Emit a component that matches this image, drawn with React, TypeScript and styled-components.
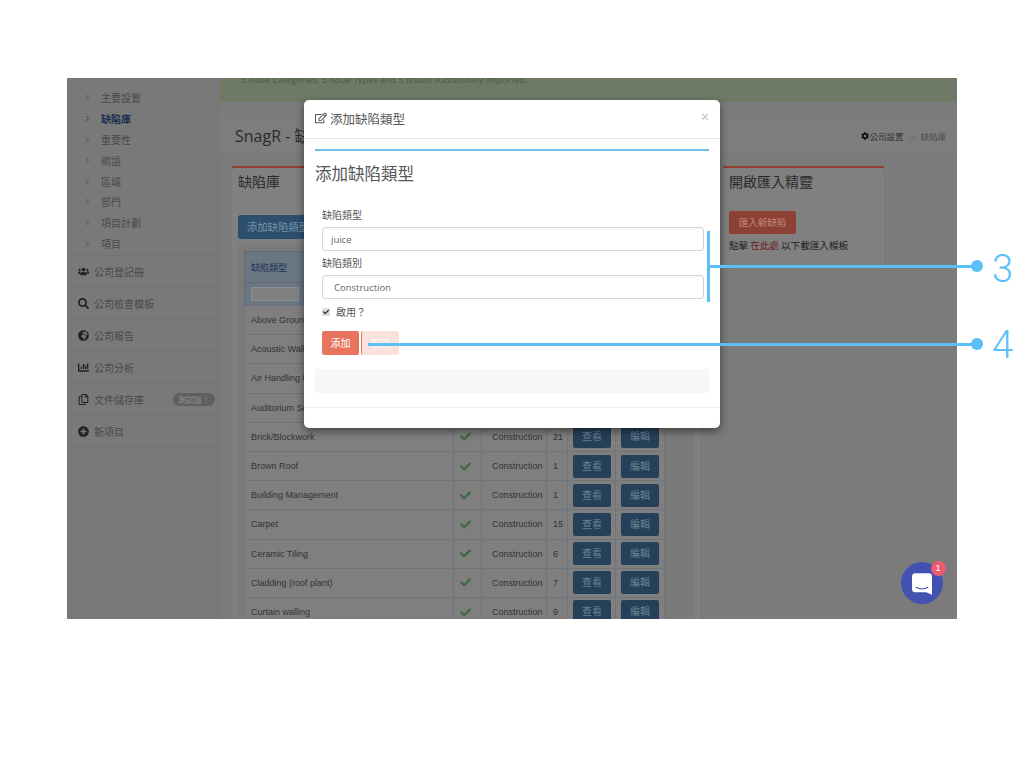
import { FC, ReactNode } from "react";
import styled, { createGlobalStyle } from "styled-components";
import { ChevronRight } from "lucide-react";
import {
  FaCheck,
  FaChartBar,
  FaCog,
  FaGlobeAfrica,
  FaPlusCircle,
  FaRegCopy,
  FaRegEdit,
  FaSearch,
  FaUsers,
} from "react-icons/fa";

const subMenu = ["主要設置", "缺陷庫", "重要性", "術語", "區域", "部門", "項目計劃", "項目"];

const mainMenu: { label: string; icon: ReactNode; badge?: string }[] = [
  { label: "公司登記冊", icon: <FaUsers /> },
  { label: "公司檢查模板", icon: <FaSearch /> },
  { label: "公司報告", icon: <FaGlobeAfrica /> },
  { label: "公司分析", icon: <FaChartBar /> },
  { label: "文件儲存庫", icon: <FaRegCopy />, badge: "測試版！" },
  { label: "新項目", icon: <FaPlusCircle /> },
];

const rows = [
  { name: "Above Ground Drainage", count: 12 },
  { name: "Acoustic Walling", count: 4 },
  { name: "Air Handling Unit", count: 3 },
  { name: "Auditorium Seating", count: 2 },
  { name: "Brick/Blockwork", count: 21 },
  { name: "Brown Roof", count: 1 },
  { name: "Building Management", count: 1 },
  { name: "Carpet", count: 15 },
  { name: "Ceramic Tiling", count: 6 },
  { name: "Cladding (roof plant)", count: 7 },
  { name: "Curtain walling", count: 9 },
];

const columns = [209, 28, 65, 21, 48, 49];

const MessengerIcon: FC = () => (
  <svg width="24" height="26" viewBox="0 0 24 26">
    <path
      d="M4 0h16a4 4 0 0 1 4 4v22l-7-3H4a4 4 0 0 1-4-4V4a4 4 0 0 1 4-4z"
      fill="#fff"
    />
    <path
      d="M5 17c4 2.6 10 2.6 14 0"
      fill="none"
      stroke="#4351b0"
      strokeWidth="1.4"
      strokeLinecap="round"
    />
  </svg>
);

const App: FC = () => {
  return (
    <>
      <GlobalStyle />
      <Page>
        <Frame>
          <Sidebar>
            <SubMenu>
              {subMenu.map((item, k) => (
                <SubItem key={k} $active={item === "缺陷庫"}>
                  <ChevronRight strokeWidth={2} />
                  {item}
                </SubItem>
              ))}
            </SubMenu>
            {mainMenu.map((item, k) => (
              <MainItem key={k}>
                <MainIcon>{item.icon}</MainIcon>
                {item.label}
                {item.badge && <Badge>{item.badge}</Badge>}
              </MainItem>
            ))}
          </Sidebar>

          <Content>
            <Alert>5 Issue Categories, 5 Issue Types and 5 Issues successfully imported.</Alert>
            <PageHeader>
              <PageTitle>SnagR - 缺陷庫</PageTitle>
              <Breadcrumb>
                <FaCog />
                公司設置
                <Sep>&gt;</Sep>
                <Crumb>缺陷庫</Crumb>
              </Breadcrumb>
            </PageHeader>
            <Panels>
              <MainPanel>
                <PanelTitle>缺陷庫</PanelTitle>
                <BlueButton>添加缺陷類型</BlueButton>
                <TableWrap>
                  <Table>
                    <colgroup>
                      {columns.map((w, k) => (
                        <col key={k} style={{ width: w }} />
                      ))}
                    </colgroup>
                    <thead>
                      <tr>
                        <HeadCell>缺陷類型</HeadCell>
                        <HeadCell>啟用</HeadCell>
                        <HeadCell>類別</HeadCell>
                        <HeadCell>#</HeadCell>
                        <HeadCell />
                        <HeadCell />
                      </tr>
                      <tr>
                        <FilterCell>
                          <FilterInput />
                        </FilterCell>
                        <FilterCell />
                        <FilterCell />
                        <FilterCell />
                        <FilterCell />
                        <FilterCell />
                      </tr>
                    </thead>
                    <tbody>
                      {rows.map((row, k) => (
                        <tr key={k}>
                          <Cell>{row.name}</Cell>
                          <CheckCell>
                            <FaCheck />
                          </CheckCell>
                          <CategoryCell>Construction</CategoryCell>
                          <Cell>{row.count}</Cell>
                          <ActionCell>
                            <RowButton>查看</RowButton>
                          </ActionCell>
                          <ActionCell>
                            <RowButton>編輯</RowButton>
                          </ActionCell>
                        </tr>
                      ))}
                    </tbody>
                  </Table>
                </TableWrap>
              </MainPanel>
              <SidePanel>
                <PanelTitle>開啟匯入精靈</PanelTitle>
                <RedButton>匯入新缺陷</RedButton>
                <Hint>
                  點擊 <HintLink>在此處</HintLink> 以下載匯入模板
                </Hint>
              </SidePanel>
            </Panels>
          </Content>

          <Modal>
            <ModalHeader>
              <ModalTitle>
                <FaRegEdit />
                添加缺陷類型
              </ModalTitle>
              <Close>×</Close>
            </ModalHeader>
            <ModalBody>
              <BlueRule />
              <FormTitle>添加缺陷類型</FormTitle>
              <Form>
                <Label>缺陷類型</Label>
                <TextInput defaultValue="juice" />
                <Label>缺陷類別</Label>
                <SelectBox>Construction</SelectBox>
                <CheckRow>
                  <CheckBox>
                    <FaCheck />
                  </CheckBox>
                  啟用？
                </CheckRow>
                <Buttons>
                  <AddButton>添加</AddButton>
                  <CancelButton>取消</CancelButton>
                </Buttons>
              </Form>
              <Well />
            </ModalBody>
            <ModalFooter />
          </Modal>

          <Messenger>
            <MessengerIcon />
            <Unread>1</Unread>
          </Messenger>
        </Frame>

        <Bracket />
        <CalloutLine $left={710} $top={265} $width={267} />
        <Dot $top={266} />
        <Number $top={243}>3</Number>
        <CalloutLine $left={368} $top={343} $width={609} />
        <Dot $top={344} />
        <Number $top={319}>4</Number>
      </Page>
    </>
  );
};

const GlobalStyle = createGlobalStyle`
  html, body {
    margin: 0;
    background: #fff;
  }
  * {
    box-sizing: border-box;
  }
  body {
    font-family: "Open Sans", "Noto Sans CJK TC", sans-serif;
    color: #2b2b2b;
  }
`;

const Page = styled.div`
  position: relative;
  width: 1024px;
  height: 768px;
  padding: 78px 67px 149px;
  overflow: hidden;
`;

/* the page behind the dialog is painted in its dimmed colours */
const Frame = styled.div`
  position: relative;
  display: flex;
  width: 890px;
  height: 541px;
  overflow: hidden;
  background: #7b7b7b;
`;

const Sidebar = styled.aside`
  flex: 0 0 153px;
  background: #797979;
  border-right: 1px solid #757575;
`;

const SubMenu = styled.ul`
  margin: 0;
  padding: 9px 0 1px;
  list-style: none;
  border-bottom: 1px solid #737373;
`;

const SubItem = styled.li<{ $active?: boolean }>`
  display: flex;
  align-items: center;
  height: 20.9px;
  padding-left: 16px;
  font-size: 10px;
  color: ${({ $active }) => ($active ? "#1a2f50" : "#4a4a4a")};
  font-weight: ${({ $active }) => ($active ? 700 : 400)};

  svg {
    width: 9px;
    height: 9px;
    margin-right: 9px;
    color: ${({ $active }) => ($active ? "#1a2f50" : "#484848")};
  }
`;

const MainItem = styled.div`
  display: flex;
  align-items: center;
  height: 32px;
  padding: 0 4px 0 10px;
  font-size: 10px;
  color: #4a4a4a;
  border-bottom: 1px solid #737373;
`;

const MainIcon = styled.span`
  display: flex;
  justify-content: center;
  width: 12px;
  margin-right: 5px;
  color: #222;

  svg {
    width: 11px;
    height: 11px;
  }
`;

const Badge = styled.span`
  margin-left: auto;
  padding: 0 5px;
  height: 13px;
  line-height: 13px;
  font-size: 8px;
  color: #8f8f8f;
  background: #5f5f5f;
  border-radius: 7px;
`;

const Content = styled.main`
  flex: 1;
  min-width: 0;
  display: flex;
  flex-direction: column;
`;

const Alert = styled.div`
  flex: 0 0 24px;
  padding-left: 21px;
  line-height: 4px;
  font-size: 9px;
  color: #4a5a40;
  background: #6f7a66;
  border-radius: 0 0 3px 3px;
`;

const PageHeader = styled.header`
  flex: 0 0 38px;
  display: flex;
  align-items: center;
  justify-content: space-between;
  margin-top: 13px;
  padding: 2px 11px 0 15px;
  background: #7d7d7d;
  border-bottom: 1px solid #777;
`;

const PageTitle = styled.h1`
  margin: 0;
  font-size: 16px;
  font-weight: 400;
  color: #2b2b2b;
`;

const Breadcrumb = styled.div`
  display: flex;
  align-items: center;
  margin-top: 3px;
  font-size: 8.5px;
  color: #333;

  svg {
    width: 8px;
    height: 8px;
    margin-right: 1px;
    color: #111;
  }
`;

const Sep = styled.span`
  margin: 0 6px;
  color: #666;
`;

const Crumb = styled.span`
  color: #484848;
`;

const Panels = styled.div`
  flex: 1;
  min-height: 0;
  display: flex;
  align-items: flex-start;
  gap: 21px;
  margin-top: 13px;
  padding-left: 11px;
`;

const MainPanel = styled.section`
  flex: 0 0 470px;
  height: 460px;
  padding: 4px 6px 0;
  background: #808080;
  border: 1px solid #777;
  border-top: 2px solid #8f4030;
  border-radius: 3px 3px 0 0;
`;

const SidePanel = styled(MainPanel)`
  flex: 0 0 163px;
  height: 100px;
`;

const PanelTitle = styled.h2`
  margin: 0;
  height: 20px;
  line-height: 20px;
  font-size: 14px;
  font-weight: 400;
  color: #2b2b2b;
`;

const BlueButton = styled.div`
  width: 81px;
  height: 24px;
  margin-top: 23px;
  padding-left: 9px;
  line-height: 24px;
  white-space: nowrap;
  font-size: 10.3px;
  color: #7a92a8;
  background: #2c4f6e;
  border-radius: 3px;
`;

const RedButton = styled.div`
  width: 67px;
  height: 23px;
  margin-top: 19px;
  line-height: 23px;
  text-align: center;
  font-size: 9.5px;
  color: #c08a7e;
  background: #8c4134;
  border-radius: 2px;
`;

const Hint = styled.p`
  margin: 5px 0 0;
  font-size: 9.6px;
  line-height: 14px;
  word-spacing: -0.5px;
  white-space: nowrap;
  color: #222;
`;

const HintLink = styled.span`
  color: #6f1c1c;
`;

const TableWrap = styled.div`
  margin: 5px 0 0;
  padding: 7px 6px;
  background: #7a7a7a;
`;

const Table = styled.table`
  width: 420px;
  table-layout: fixed;
  border-collapse: collapse;
  border: 1px solid #5f6a78;
  font-family: "Liberation Sans", "Noto Sans CJK TC", sans-serif;
  font-size: 9px;
  background: #7f7f7f;
`;

const HeadCell = styled.th`
  height: 31px;
  padding: 0 6px;
  text-align: left;
  font-size: 9px;
  font-weight: 400;
  color: #1e3458;
  background: #6a7682;
  border-bottom: 1px solid #5f6a78;
`;

const FilterCell = styled.th`
  height: 23px;
  padding: 0 6px;
  background: #6a7682;
`;

const FilterInput = styled.div`
  width: 48px;
  height: 14px;
  background: #808080;
  border: 1px solid #8a8f96;
  border-radius: 1px;
`;

const Cell = styled.td`
  height: 29.2px;
  padding: 0 6px;
  color: #333;
  white-space: nowrap;
  overflow: hidden;
  border: 1px solid #71737a;
`;

const CheckCell = styled(Cell)`
  color: #3a6a3a;

  svg {
    width: 11px;
    height: 11px;
    vertical-align: middle;
  }
`;

const CategoryCell = styled(Cell)`
  padding-left: 10px;
`;

const ActionCell = styled(Cell)`
  padding: 0 5px;
  text-align: center;
`;

const RowButton = styled.div`
  width: 38px;
  height: 23px;
  line-height: 23px;
  margin: 0 auto;
  font-size: 10px;
  text-align: center;
  color: #6a8094;
  background: #264059;
  border-radius: 2px;
`;

const Modal = styled.div`
  position: absolute;
  top: 22px;
  left: 237px;
  width: 416px;
  height: 328px;
  background: #fff;
  border-radius: 5px;
  box-shadow: 0 3px 9px rgba(0, 0, 0, 0.5);
`;

const ModalHeader = styled.div`
  display: flex;
  align-items: center;
  justify-content: space-between;
  height: 39px;
  padding: 0 11px 2px;
  border-bottom: 1px solid #e8e8e8;
`;

const ModalTitle = styled.h4`
  display: flex;
  align-items: center;
  margin: 0;
  font-size: 12.5px;
  font-weight: 400;
  color: #555;

  svg {
    width: 12px;
    height: 12px;
    margin-right: 3px;
  }
`;

const Close = styled.span`
  margin-top: -3px;
  font-size: 14px;
  color: #bbb;
`;

const ModalBody = styled.div`
  padding: 10px 11px 0;
`;

const BlueRule = styled.div`
  height: 2px;
  background: #6cc3ea;
`;

const FormTitle = styled.h3`
  margin: 11px 0 0;
  line-height: 24px;
  font-size: 16.5px;
  font-weight: 400;
  color: #555;
`;

const Form = styled.div`
  display: flex;
  flex-direction: column;
  padding: 17px 5px 0 7px;
`;

const Label = styled.label`
  height: 24px;
  line-height: 24px;
  font-size: 10px;
  color: #555;
`;

const fieldStyles = `
  width: 382px;
  height: 24px;
  background: #fff;
  border: 1px solid #d5d5d5;
  border-radius: 3px;
  box-shadow: inset 0 1px 1px rgba(0, 0, 0, 0.05);
  font-family: "Open Sans", sans-serif;
  font-size: 9.5px;
  color: #666;
`;

const TextInput = styled.input`
  ${fieldStyles}
  padding: 0 8px;
  outline: none;
`;

const SelectBox = styled.div`
  ${fieldStyles}
  padding: 0 11px;
  line-height: 24px;
`;

const CheckRow = styled.div`
  display: flex;
  align-items: center;
  height: 14px;
  margin-top: 6px;
  line-height: 14px;
  font-size: 10px;
  color: #555;
`;

const CheckBox = styled.span`
  display: flex;
  align-items: center;
  justify-content: center;
  width: 8px;
  height: 8px;
  margin-right: 6px;
  background: #ddd;
  border-radius: 1px;
  color: #222;

  svg {
    width: 6px;
    height: 6px;
  }
`;

const Buttons = styled.div`
  display: flex;
  gap: 2px;
  margin-top: 12px;
`;

const AddButton = styled.div`
  width: 37px;
  height: 24px;
  line-height: 24px;
  text-align: center;
  font-size: 10px;
  color: #fff;
  background: #e8735f;
  border-radius: 2px;
`;

const CancelButton = styled(AddButton)`
  width: 38px;
  background: #f9e1dc;
  border-left: 1px solid #e8735f;
`;

const Well = styled.div`
  height: 24px;
  margin-top: 14px;
  background: #f7f7f7;
`;

const ModalFooter = styled.div`
  margin-top: 14px;
  border-top: 1px solid #eee;
`;

const Messenger = styled.div`
  position: absolute;
  left: 834px;
  top: 484px;
  width: 42px;
  height: 42px;
  display: flex;
  align-items: center;
  justify-content: center;
  background: #4351b0;
  border-radius: 50%;
  padding-top: 2px;

  svg {
    width: 20px;
    height: 22px;
  }
`;

const Unread = styled.span`
  position: absolute;
  top: -1.5px;
  right: -2.5px;
  width: 15px;
  height: 15px;
  line-height: 15px;
  text-align: center;
  font-family: "Liberation Sans", sans-serif;
  font-size: 9px;
  color: #fff;
  background: #ee5a6f;
  border-radius: 50%;
`;

const Bracket = styled.div`
  position: absolute;
  left: 707px;
  top: 231px;
  width: 3px;
  height: 71px;
  background: #5bc0f8;
`;

const CalloutLine = styled.div<{ $left: number; $top: number; $width: number }>`
  position: absolute;
  left: ${({ $left }) => $left}px;
  top: ${({ $top }) => $top}px;
  width: ${({ $width }) => $width}px;
  height: 3px;
  background: #5bc0f8;
`;

const Dot = styled.div<{ $top: number }>`
  position: absolute;
  left: 971px;
  top: ${({ $top }) => $top - 6}px;
  width: 12px;
  height: 12px;
  background: #5bc0f8;
  border-radius: 50%;
`;

const Number = styled.div<{ $top: number }>`
  position: absolute;
  left: 992px;
  top: ${({ $top }) => $top}px;
  font-family: Roboto, sans-serif;
  font-weight: 300;
  font-size: 38px;
  line-height: 52px;
  color: #5bc0f8;
`;

export default App;
